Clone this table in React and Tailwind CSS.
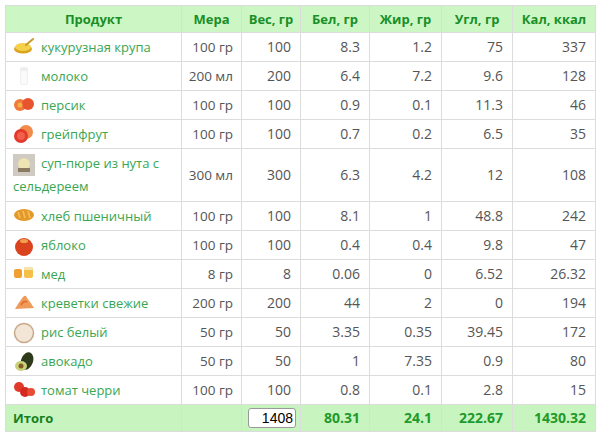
import React from "react";

const Corn = () => (
  <svg width="22" height="18" viewBox="0 0 22 18">
    <ellipse cx="10" cy="12" rx="9" ry="4.5" fill="#d9a520" />
    <ellipse cx="10" cy="10" rx="8" ry="4" fill="#f5d04a" />
    <path d="M13 8 L20 2" stroke="#c99a2a" strokeWidth="2" strokeLinecap="round" />
  </svg>
);
const Milk = () => (
  <svg width="22" height="20" viewBox="0 0 22 20">
    <rect x="7" y="1" width="8" height="18" rx="2" fill="#eef0ee" />
    <rect x="8" y="5" width="6" height="13" rx="1" fill="#fafafa" />
  </svg>
);
const Peach = () => (
  <svg width="22" height="18" viewBox="0 0 22 18">
    <circle cx="7" cy="10" r="6" fill="#f07a3a" />
    <circle cx="15" cy="9" r="6" fill="#e8542e" />
    <circle cx="7" cy="10" r="2.5" fill="#f5b048" />
  </svg>
);
const Grape = () => (
  <svg width="22" height="20" viewBox="0 0 22 20">
    <circle cx="13" cy="8" r="7" fill="#f28a4a" />
    <circle cx="8" cy="12" r="7" fill="#e23a2c" />
    <circle cx="8" cy="12" r="4" fill="#f0604a" />
  </svg>
);
const Soup = () => (
  <svg width="22" height="22" viewBox="0 0 22 22">
    <rect x="0" y="0" width="22" height="22" fill="#cfcac2" />
    <circle cx="11" cy="10" r="6" fill="#eee3b2" />
    <rect x="5" y="14" width="12" height="4" fill="#8a7a60" />
  </svg>
);
const Bread = () => (
  <svg width="22" height="16" viewBox="0 0 22 16">
    <ellipse cx="11" cy="9" rx="10" ry="6" fill="#e49a2a" />
    <path d="M5 6 L7 12 M10 5 L12 12 M15 5 L17 12" stroke="#f5c05a" strokeWidth="1.5" />
  </svg>
);
const Apple = () => (
  <svg width="22" height="22" viewBox="0 0 22 22">
    <circle cx="11" cy="12" r="9" fill="#d9441e" />
    <ellipse cx="11" cy="6" rx="4" ry="2" fill="#f0a050" />
  </svg>
);
const Honey = () => (
  <svg width="22" height="16" viewBox="0 0 22 16">
    <rect x="1" y="5" width="8" height="9" rx="2" fill="#f0a030" />
    <rect x="11" y="4" width="9" height="10" rx="2" fill="#f4c04a" />
    <rect x="11" y="3" width="9" height="3" fill="#f5e3b0" />
  </svg>
);
const Shrimp = () => (
  <svg width="22" height="18" viewBox="0 0 22 18">
    <path d="M2 16 Q6 9 10 4 Q13 1 14 5 Q18 10 21 15 Z" fill="#f09a5a" />
    <path d="M8 12 Q11 7 14 9" stroke="#e06a30" strokeWidth="1.5" fill="none" />
  </svg>
);
const Rice = () => (
  <svg width="22" height="22" viewBox="0 0 22 22">
    <circle cx="11" cy="11" r="9.5" fill="#f3e6d6" stroke="#c9a88a" strokeWidth="1.5" />
  </svg>
);
const Avocado = () => (
  <svg width="22" height="22" viewBox="0 0 22 22">
    <ellipse cx="14" cy="10" rx="6" ry="9" fill="#2f3a1c" transform="rotate(20 14 10)" />
    <ellipse cx="8" cy="15" rx="6" ry="5" fill="#c8d27a" />
    <circle cx="8" cy="15" r="2.5" fill="#8a5a2a" />
  </svg>
);
const Tomato = () => (
  <svg width="22" height="18" viewBox="0 0 22 18">
    <circle cx="6" cy="7" r="5" fill="#e03a2a" />
    <circle cx="12" cy="12" r="5" fill="#d42a20" />
    <circle cx="18" cy="12" r="4" fill="#e84a34" />
  </svg>
);

const rows = [
  [Corn, "кукурузная крупа", "100 гр", "100", "8.3", "1.2", "75", "337"],
  [Milk, "молоко", "200 мл", "200", "6.4", "7.2", "9.6", "128"],
  [Peach, "персик", "100 гр", "100", "0.9", "0.1", "11.3", "46"],
  [Grape, "грейпфрут", "100 гр", "100", "0.7", "0.2", "6.5", "35"],
  [Soup, "суп-пюре из нута с сельдереем", "300 мл", "300", "6.3", "4.2", "12", "108"],
  [Bread, "хлеб пшеничный", "100 гр", "100", "8.1", "1", "48.8", "242"],
  [Apple, "яблоко", "100 гр", "100", "0.4", "0.4", "9.8", "47"],
  [Honey, "мед", "8 гр", "8", "0.06", "0", "6.52", "26.32"],
  [Shrimp, "креветки свежие", "200 гр", "200", "44", "2", "0", "194"],
  [Rice, "рис белый", "50 гр", "50", "3.35", "0.35", "39.45", "172"],
  [Avocado, "авокадо", "50 гр", "50", "1", "7.35", "0.9", "80"],
  [Tomato, "томат черри", "100 гр", "100", "0.8", "0.1", "2.8", "15"],
];

const heads = ["Продукт", "Мера", "Вес, гр", "Бел, гр", "Жир, гр", "Угл, гр", "Кал, ккал"];

export default function App() {
  return (
    <div className="bg-white w-[600px] h-[435px] overflow-hidden pt-[5px] pl-[5px] font-['Open_Sans',sans-serif]">
      <table className="table-fixed border-collapse w-[590px] text-[14px]">
        <colgroup>
          <col className="w-[176px]" />
          <col className="w-[60px]" />
          <col className="w-[59px]" />
          <col className="w-[69px]" />
          <col className="w-[72px]" />
          <col className="w-[71px]" />
          <col className="w-[83px]" />
        </colgroup>
        <thead>
          <tr className="bg-[#ccf7c4] h-[27px]">
            {heads.map((h) => (
              <th key={h} className="border border-[#dcdcdc] text-center font-bold text-[13px] text-[#1a8f27] px-1 py-0 leading-[18px]">
                {h}
              </th>
            ))}
          </tr>
        </thead>
        <tbody>
          {rows.map(([Icon, name, measure, ...vals]) => (
            <tr key={name} className="h-[29px]">
              <td
                className={
                  "border border-[#dcdcdc] pl-[7px] pr-1 text-[13px] text-[#3aa652] leading-[23px] " +
                  (name.length > 20 ? "py-[3px]" : "py-[2px]")
                }
              >
                <span className="inline-block align-middle mr-[6px] w-[22px] h-[18px] leading-none -mt-[4px]">
                  <Icon />
                </span>
                <span>{name}</span>
              </td>
              <td className="border border-[#dcdcdc] text-right pr-[8px] text-[13.5px] text-[#555] py-0 leading-[18px]">
                {measure}
              </td>
              {vals.map((v, i) => (
                <td key={i} className="border border-[#dcdcdc] text-right pr-[9px] text-[#555] py-0 leading-[18px]">
                  {v}
                </td>
              ))}
            </tr>
          ))}
          <tr className="bg-[#c8f5bf] h-[27px]">
            <td className="border border-[#dcdcdc] pl-[7px] font-bold text-[13px] text-[#17801f] py-0 leading-[18px]">Итого</td>
            <td className="border border-[#dcdcdc]"></td>
            <td className="border border-[#dcdcdc] pl-[6px] pr-[4px] py-0 leading-none">
              <input
                readOnly
                value="1408"
                className="w-[48px] h-[20px] bg-white border border-[#999] rounded-[3px] text-right pr-[2px] text-[14px] text-black font-['Liberation_Sans',sans-serif]"
              />
            </td>
            {["80.31", "24.1", "222.67", "1430.32"].map((v) => (
              <td key={v} className="border border-[#dcdcdc] text-right pr-[9px] font-bold text-[#1f9a2c] py-0 leading-[18px]">
                {v}
              </td>
            ))}
          </tr>
        </tbody>
      </table>
    </div>
  );
}
